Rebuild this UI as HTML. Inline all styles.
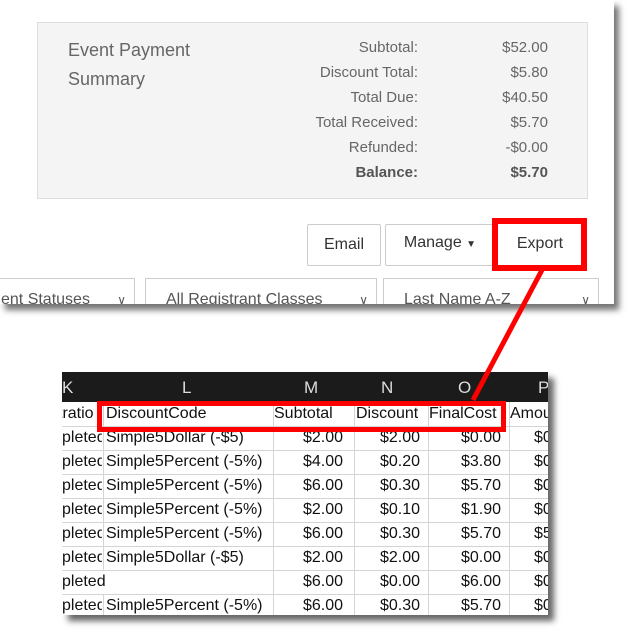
<!DOCTYPE html>
<html><head><style>
body{margin:0;width:634px;height:632px;background:#fff;position:relative;overflow:hidden;font-family:"Liberation Sans",sans-serif}
.card{position:absolute;left:0;top:0;width:614px;height:304px;background:#fff;box-shadow:5px 6px 6px rgba(0,0,0,.55);overflow:hidden}
.gray{position:absolute;left:37px;top:22px;width:549px;height:175px;background:#f4f4f4;border:1px solid #ddd}
.t{position:absolute;color:#666;font-size:18px}
.lab{position:absolute;right:196px;font-size:15px;color:#666;text-align:right}
.val{position:absolute;right:66px;font-size:15px;color:#666;text-align:right}
.btn{position:absolute;top:224px;height:40px;border:1px solid #ccc;border-radius:2px;background:#fff;font-size:16px;color:#333;line-height:40px;text-align:center}
.sel{position:absolute;top:278px;height:40px;border:1px solid #ccc;font-size:16px;color:#555;line-height:42px;padding-left:20px;box-sizing:border-box}
.sel i{position:absolute;right:8px;top:0;font-style:normal;font-size:12px}
.sheet{position:absolute;left:62px;top:372px;width:486px;height:243px;background:#fff;box-shadow:6px 6px 6px rgba(0,0,0,.6);overflow:hidden}
.c{position:absolute;font-size:16px;color:#111;white-space:nowrap;overflow:hidden;height:24px;line-height:24px}
.vl{position:absolute;top:0;width:1px;height:243px;background:#d4d4d4}
.hl{position:absolute;left:0;width:486px;height:1px;background:#d4d4d4}
.r{text-align:right}
.h{color:#ddd;font-size:17px}
</style></head><body>
<div class="card">
 <div class="gray"></div>
 <div class="t" style="left:68px;top:40px">Event Payment</div>
 <div class="t" style="left:68px;top:69px">Summary</div>
 <div class="lab" style="top:39px">Subtotal:</div><div class="val" style="top:39px">$52.00</div>
 <div class="lab" style="top:64px">Discount Total:</div><div class="val" style="top:64px">$5.80</div>
 <div class="lab" style="top:89px">Total Due:</div><div class="val" style="top:89px">$40.50</div>
 <div class="lab" style="top:114px">Total Received:</div><div class="val" style="top:114px">$5.70</div>
 <div class="lab" style="top:139px">Refunded:</div><div class="val" style="top:139px">-$0.00</div>
 <div class="lab" style="top:164px;color:#555;font-weight:bold">Balance:</div><div class="val" style="top:164px;color:#555;font-weight:bold">$5.70</div>
 <div class="btn" style="left:307px;width:72px">Email</div>
 <div class="btn" style="left:385px;width:108px;line-height:36px">Manage <span style="font-size:10px">▼</span></div>
 <div class="btn" style="left:496px;width:88px;border:none">Export</div>
 <div class="sel" style="left:-20px;width:155px">ent Statuses<i>∨</i></div>
 <div class="sel" style="left:145px;width:232px">All Registrant Classes<i>∨</i></div>
 <div class="sel" style="left:383px;width:216px">Last Name A-Z<i>∨</i></div>
</div>
<div class="sheet">
 <div class="vl" style="left:41px"></div><div class="vl" style="left:211px"></div><div class="vl" style="left:292px"></div><div class="vl" style="left:366px"></div><div class="vl" style="left:447px"></div>
 <div style="position:absolute;left:0;top:0;width:486px;height:30px;background:#1b1b1b"></div>
 <div class="c h" style="left:0;top:4px">K</div>
 <div class="c h" style="left:120px;top:4px">L</div>
 <div class="c h" style="left:242px;top:4px">M</div>
 <div class="c h" style="left:319px;top:4px">N</div>
 <div class="c h" style="left:396px;top:4px">O</div>
 <div class="c h" style="left:476px;top:4px">P</div>
 <div class="hl" style="top:54px"></div><div class="hl" style="top:78px"></div><div class="hl" style="top:102px"></div><div class="hl" style="top:126px"></div><div class="hl" style="top:150px"></div><div class="hl" style="top:174px"></div><div class="hl" style="top:198px"></div><div class="hl" style="top:222px"></div>
 <div class="c" style="left:-12px;top:30px;width:52px">stratio</div>
 <div class="c" style="left:44px;top:30px">DiscountCode</div>
 <div class="c" style="left:212px;top:30px">Subtotal</div>
 <div class="c" style="left:294px;top:30px">Discount</div>
 <div class="c" style="left:367px;top:30px">FinalCost</div>
 <div class="c" style="left:448px;top:30px">Amount</div>
 <div class="c" style="left:0;top:54px;width:40px">pleted</div><div class="c" style="left:44px;top:54px">Simple5Dollar (-$5)</div><div class="c r" style="left:212px;top:54px;width:69px">$2.00</div><div class="c r" style="left:293px;top:54px;width:65px">$2.00</div><div class="c r" style="left:367px;top:54px;width:72px">$0.00</div><div class="c" style="left:472px;top:54px">$0</div>
 <div class="c" style="left:0;top:78px;width:40px">pleted</div><div class="c" style="left:44px;top:78px">Simple5Percent (-5%)</div><div class="c r" style="left:212px;top:78px;width:69px">$4.00</div><div class="c r" style="left:293px;top:78px;width:65px">$0.20</div><div class="c r" style="left:367px;top:78px;width:72px">$3.80</div><div class="c" style="left:472px;top:78px">$0</div>
 <div class="c" style="left:0;top:102px;width:40px">pleted</div><div class="c" style="left:44px;top:102px">Simple5Percent (-5%)</div><div class="c r" style="left:212px;top:102px;width:69px">$6.00</div><div class="c r" style="left:293px;top:102px;width:65px">$0.30</div><div class="c r" style="left:367px;top:102px;width:72px">$5.70</div><div class="c" style="left:472px;top:102px">$0</div>
 <div class="c" style="left:0;top:126px;width:40px">pleted</div><div class="c" style="left:44px;top:126px">Simple5Percent (-5%)</div><div class="c r" style="left:212px;top:126px;width:69px">$2.00</div><div class="c r" style="left:293px;top:126px;width:65px">$0.10</div><div class="c r" style="left:367px;top:126px;width:72px">$1.90</div><div class="c" style="left:472px;top:126px">$0</div>
 <div class="c" style="left:0;top:150px;width:40px">pleted</div><div class="c" style="left:44px;top:150px">Simple5Percent (-5%)</div><div class="c r" style="left:212px;top:150px;width:69px">$6.00</div><div class="c r" style="left:293px;top:150px;width:65px">$0.30</div><div class="c r" style="left:367px;top:150px;width:72px">$5.70</div><div class="c" style="left:472px;top:150px">$5</div>
 <div class="c" style="left:0;top:174px;width:40px">pleted</div><div class="c" style="left:44px;top:174px">Simple5Dollar (-$5)</div><div class="c r" style="left:212px;top:174px;width:69px">$2.00</div><div class="c r" style="left:293px;top:174px;width:65px">$2.00</div><div class="c r" style="left:367px;top:174px;width:72px">$0.00</div><div class="c" style="left:472px;top:174px">$0</div>
 <div style="position:absolute;left:41px;top:199px;width:170px;height:23px;background:#fff"></div>
 <div class="c" style="left:0;top:198px">pleted</div><div class="c r" style="left:212px;top:198px;width:69px">$6.00</div><div class="c r" style="left:293px;top:198px;width:65px">$0.00</div><div class="c r" style="left:367px;top:198px;width:72px">$6.00</div><div class="c" style="left:472px;top:198px">$0</div>
 <div class="c" style="left:0;top:222px;width:40px">pleted</div><div class="c" style="left:44px;top:222px">Simple5Percent (-5%)</div><div class="c r" style="left:212px;top:222px;width:69px">$6.00</div><div class="c r" style="left:293px;top:222px;width:65px">$0.30</div><div class="c r" style="left:367px;top:222px;width:72px">$5.70</div><div class="c" style="left:472px;top:222px">$0</div>
</div>
<svg style="position:absolute;left:0;top:0" width="634" height="632">
 <line x1="542" y1="270" x2="473" y2="400" stroke="#f00" stroke-width="5"/>
 <rect x="495" y="221" width="89" height="47" fill="none" stroke="#f00" stroke-width="6"/>
 <rect x="99.5" y="403.5" width="404" height="26" fill="none" stroke="#f00" stroke-width="5"/>
</svg>
</body></html>
